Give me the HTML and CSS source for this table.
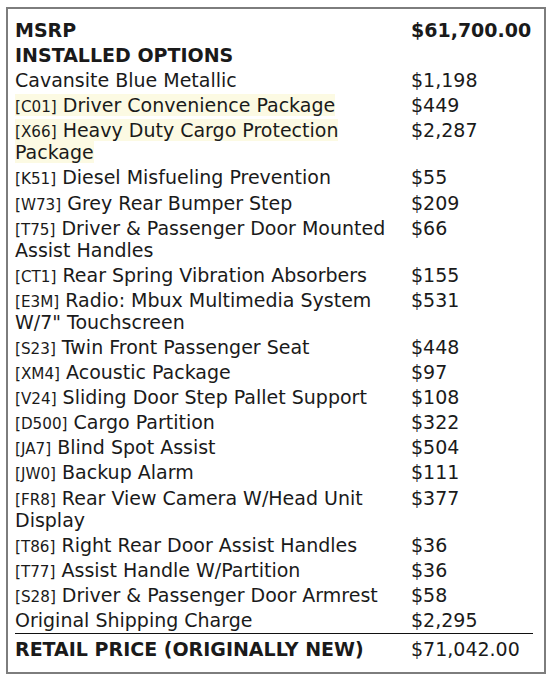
FILE: index.html
```html
<!DOCTYPE html>
<html lang="en">
<head>
<meta charset="utf-8">
<title>Window Sticker</title>
<link rel="stylesheet" href="styles.css">
</head>
<body>
<div class="card">
  <table class="sticker">
    <colgroup><col class="c-desc"><col class="c-price"></colgroup>
    <tbody>
      <tr class="bold"><td>MSRP</td><td>$61,700.00</td></tr>
      <tr class="bold"><td>INSTALLED OPTIONS</td><td></td></tr>
      <tr><td>Cavansite Blue Metallic</td><td>$1,198</td></tr>
      <tr><td><span class="hl"><span class="code">[C01]</span> Driver Convenience Package</span></td><td>$449</td></tr>
      <tr><td><span class="hl"><span class="code">[X66]</span> Heavy Duty Cargo Protection Package</span></td><td>$2,287</td></tr>
      <tr><td><span class="code">[K51]</span> Diesel Misfueling Prevention</td><td>$55</td></tr>
      <tr><td><span class="code">[W73]</span> Grey Rear Bumper Step</td><td>$209</td></tr>
      <tr><td><span class="code">[T75]</span> Driver &amp; Passenger Door Mounted Assist Handles</td><td>$66</td></tr>
      <tr><td><span class="code">[CT1]</span> Rear Spring Vibration Absorbers</td><td>$155</td></tr>
      <tr><td><span class="code">[E3M]</span> Radio: Mbux Multimedia System W/7" Touchscreen</td><td>$531</td></tr>
      <tr><td><span class="code">[S23]</span> Twin Front Passenger Seat</td><td>$448</td></tr>
      <tr><td><span class="code">[XM4]</span> Acoustic Package</td><td>$97</td></tr>
      <tr><td><span class="code">[V24]</span> Sliding Door Step Pallet Support</td><td>$108</td></tr>
      <tr><td><span class="code">[D500]</span> Cargo Partition</td><td>$322</td></tr>
      <tr><td><span class="code">[JA7]</span> Blind Spot Assist</td><td>$504</td></tr>
      <tr><td><span class="code">[JW0]</span> Backup Alarm</td><td>$111</td></tr>
      <tr><td><span class="code">[FR8]</span> Rear View Camera W/Head Unit Display</td><td>$377</td></tr>
      <tr><td><span class="code">[T86]</span> Right Rear Door Assist Handles</td><td>$36</td></tr>
      <tr><td><span class="code">[T77]</span> Assist Handle W/Partition</td><td>$36</td></tr>
      <tr><td><span class="code">[S28]</span> Driver &amp; Passenger Door Armrest</td><td>$58</td></tr>
      <tr><td>Original Shipping Charge</td><td>$2,295</td></tr>
      <tr class="total"><td>RETAIL PRICE (ORIGINALLY NEW)</td><td>$71,042.00</td></tr>
    </tbody>
  </table>
</div>
</body>
</html>
```
FILE: styles.css
```css
html, body {
  margin: 0;
  padding: 0;
  background: #ffffff;
}

body {
  padding: 7px 0 0 6px;
  font-family: "DejaVu Sans", "Liberation Sans", sans-serif;
  color: #1a1a1a;
}

.card {
  border: 2px solid #7d7d7d;
  padding: 9px 11px 10px 7px;
  box-sizing: border-box;
  width: 540px;
}

.sticker {
  width: 518px;
  border-collapse: collapse;
  font-size: 19px;
  line-height: 22px;
}

.c-desc { width: 396px; }
.c-price { width: 122px; }

.sticker td {
  padding: 1px 0 2.1px 0;
  vertical-align: top;
  text-align: left;
}

.bold td { font-weight: bold; }

.code {
  font-size: 0.8em;
  line-height: 1;
}

.hl {
  background: #fcfae3;
}

.total td {
  border-top: 1px solid #111;
  padding-top: 4px;
  padding-bottom: 2px;
}

.total td:first-child { font-weight: bold; }
```
